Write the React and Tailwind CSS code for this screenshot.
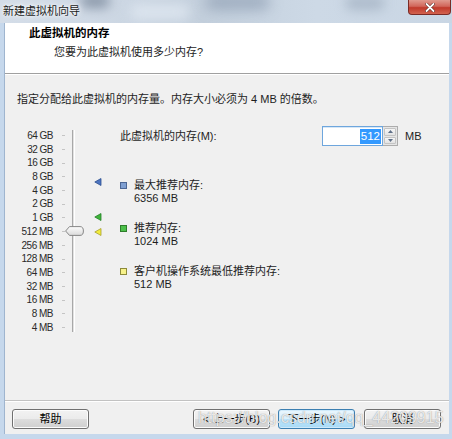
import React from "react";

const labels = ["64 GB","32 GB","16 GB","8 GB","4 GB","2 GB","1 GB","512 MB","256 MB","128 MB","64 MB","32 MB","16 MB","8 MB","4 MB"];

function Tri({ color, stroke, top }) {
  return (
    <svg className="absolute left-[19px]" style={{ top }} width="8" height="8" viewBox="0 0 8 8">
      <polygon points="7,0.5 7,7.5 0.8,4" fill={color} stroke={stroke} strokeWidth="0.8" />
    </svg>
  );
}

function Btn({ children, primary, className = "" }) {
  return (
    <div
      className={
        "h-[20px] w-[77px] flex items-center justify-center rounded-[3px] border text-[11px] text-black " +
        (primary
          ? "border-[#3c7fb1] bg-[linear-gradient(#eaf6fd_0%,#d9f0fc_50%,#bee6fd_51%,#a7d9f5_100%)] shadow-[inset_0_0_0_1px_#cfeafb]"
          : "border-[#707070] bg-[linear-gradient(#f2f2f2_0%,#ebebeb_50%,#dddddd_51%,#cfcfcf_100%)] shadow-[inset_0_0_0_1px_#fcfcfc]") +
        " " + className
      }
    >
      {children}
    </div>
  );
}

function Item({ sq, sqBorder, label, value, className = "" }) {
  return (
    <div className={"flex " + className}>
      <div className="w-[14px] pt-[3px]">
        <div className="w-[7px] h-[7px] border" style={{ background: sq, borderColor: sqBorder }} />
      </div>
      <div className="leading-[13px] text-[11px] text-[#1e1e1e]">
        <div>{label}</div>
        <div>{value}</div>
      </div>
    </div>
  );
}

export default function App() {
  return (
    <div className="w-[452px] h-[439px] relative overflow-hidden bg-[#c6d8ec] font-['Liberation_Sans','Noto_Sans_CJK_SC',sans-serif] flex flex-col">
      {/* title bar */}
      <div className="relative h-[23px] shrink-0 overflow-hidden bg-[linear-gradient(to_right,#d4dde8,#cfd9e5_20%,#c3cfdc_45%,#cdd9e6_70%,#c9d6e4)]">
        <div className="absolute left-[80px] top-[-6px] w-[30px] h-[14px] rounded-full bg-[#6d7c90] blur-[6px] opacity-70" />
        <div className="absolute left-[205px] top-[-6px] w-[65px] h-[16px] rounded-full bg-[#8d9db2] blur-[7px] opacity-70" />
        <div className="absolute left-[345px] top-[-4px] w-[40px] h-[14px] rounded-full bg-[#97a6b8] blur-[6px] opacity-60" />
        <div className="absolute left-[130px] top-[4px] w-[60px] h-[16px] rounded-full bg-[#e3ebf4] blur-[6px] opacity-70" />
        <div className="absolute left-[3px] top-[3px] text-[11px] leading-[16px] text-[#1a1a1a] [text-shadow:0_0_6px_#ffffff,0_0_3px_#ffffff]">
          新建虚拟机向导
        </div>
        <div className="absolute left-[408px] top-0 w-[43px] h-[15px] rounded-b-[4px] border border-t-0 border-[#7a2b26] bg-[linear-gradient(#e09a8f_0%,#d1665a_45%,#c0392b_55%,#d2634f_100%)] flex items-center justify-center">
          <svg width="10" height="9" viewBox="0 0 10 9">
            <path d="M1.5 1 L8.5 8 M8.5 1 L1.5 8" stroke="#5a2420" strokeWidth="3" strokeLinecap="round" />
            <path d="M1.5 1 L8.5 8 M8.5 1 L1.5 8" stroke="#ffffff" strokeWidth="1.8" strokeLinecap="round" />
          </svg>
        </div>
      </div>

      {/* content */}
      <div className="relative flex-1 ml-[4px] mr-[3px] mb-[5px] flex flex-col bg-[#f0f0f0] border-l border-[#9fb5cf]">
        {/* header */}
        <div className="h-[51px] shrink-0 bg-white border-b border-[#a0a0a0] pt-[3px]">
          <div className="pl-[24px] text-[11.5px] leading-[14px] font-bold text-black">此虚拟机的内存</div>
          <div className="pl-[49px] mt-[5px] text-[11px] leading-[14px] text-[#1e1e1e]">您要为此虚拟机使用多少内存?</div>
        </div>
        <div className="h-px bg-white" />

        {/* body */}
        <div className="flex-1 flex flex-col">
          <div className="pt-[17px] pl-[12px] text-[11px] leading-[14px] text-[#1e1e1e]">
            指定分配给此虚拟机的内存量。内存大小必须为 4 MB 的倍数。
          </div>

          <div className="mt-[20px] flex">
            {/* labels */}
            <div className="w-[48px] pt-[3px] flex flex-col text-right">
              {labels.map((l) => (
                <div key={l} className="h-[13.7px] leading-[13.7px] text-[10px] tracking-[-0.5px] text-[#2a2a2a]">
                  {l}
                </div>
              ))}
            </div>
            {/* ticks */}
            <div className="ml-[9px] w-[3px] pt-[3px] flex flex-col">
              {labels.map((l) => (
                <div key={l} className="h-[13.7px] flex items-center">
                  <div className="w-[3px] h-px bg-[#c4c4c4]" />
                </div>
              ))}
            </div>
            {/* track */}
            <div className="relative ml-[7px] w-[3px] pt-[4px] pb-[2px]">
              <div className="h-full w-[3px] border-l border-[#a8a8a8] border-r border-r-white bg-[#e2e2e2]" />
              <svg className="absolute left-[-7px] top-[100px]" width="19" height="10" viewBox="0 0 19 10">
                <defs>
                  <linearGradient id="th" x1="0" y1="0" x2="0" y2="1">
                    <stop offset="0" stopColor="#fdfdfd" />
                    <stop offset="1" stopColor="#dadada" />
                  </linearGradient>
                </defs>
                <path d="M0.6 5 L4.5 0.6 H15 Q18.4 0.6 18.4 5 Q18.4 9.4 15 9.4 H4.5 Z" fill="url(#th)" stroke="#7a7a7a" strokeWidth="0.9" />
              </svg>
            </div>
            {/* markers */}
            <div className="relative w-[45px]">
              <Tri color="#4d74c0" stroke="#2c4f8f" top={52} />
              <Tri color="#3fb43a" stroke="#24802a" top={87} />
              <Tri color="#f2ec3a" stroke="#a7a030" top={102} />
            </div>
            {/* right column */}
            <div className="flex-1 flex flex-col">
              <div className="h-[20px] flex items-center text-[11px] text-[#1e1e1e]">
                <div className="w-[202px]">此虚拟机的内存(M):</div>
                <div className="w-[61px] h-[20px] border border-[#6ea6dd] bg-white flex items-center justify-end pr-[1px] shadow-[inset_0_1px_0_#d7e7f6]">
                  <span className="bg-[#3399ff] text-white leading-[15px] px-[1px] text-[11.5px]">512</span>
                </div>
                <div className="w-[15px] h-[20px] border border-l-0 border-[#adadad] bg-[#e6e6e6] flex flex-col p-[1px] gap-px">
                  <div className="flex-1 rounded-[1px] border border-[#c4c4c4] bg-[linear-gradient(#f6f6f6,#e3e3e3)] flex items-center justify-center">
                    <svg width="5" height="3" viewBox="0 0 5 3"><polygon points="2.5,0 5,3 0,3" fill="#5f6f87" /></svg>
                  </div>
                  <div className="flex-1 rounded-[1px] border border-[#c4c4c4] bg-[linear-gradient(#f6f6f6,#e3e3e3)] flex items-center justify-center">
                    <svg width="5" height="3" viewBox="0 0 5 3"><polygon points="0,0 5,0 2.5,3" fill="#5f6f87" /></svg>
                  </div>
                </div>
                <div className="ml-[7px]">MB</div>
              </div>
              <Item className="mt-[33px]" sq="#7f9fd1" sqBorder="#4c6694" label="最大推荐内存:" value="6356 MB" />
              <Item className="mt-[17px]" sq="#4cc04a" sqBorder="#2f7d2c" label="推荐内存:" value="1024 MB" />
              <Item className="mt-[17px]" sq="#f7f28a" sqBorder="#8d8a3a" label="客户机操作系统最低推荐内存:" value="512 MB" />
            </div>
          </div>
        </div>

        {/* footer */}
        <div className="shrink-0 border-t border-[#c2c2c2]">
          <div className="h-px bg-white" />
          <div className="flex items-center pt-[7px] pb-[5px] pl-[7px] pr-[8px]">
            <Btn className="w-[77px]">帮助</Btn>
            <div className="flex-1" />
            <Btn>&lt; 上一步(B)</Btn>
            <Btn primary className="ml-[8px]">下一步(N) &gt;</Btn>
            <Btn className="ml-[9px] w-[76px]">取消</Btn>
          </div>
        </div>

        <div className="absolute left-[193px] top-[385px] text-[16px] leading-[20px] text-white/80 [text-shadow:0_0_1px_rgba(80,80,80,0.7)] whitespace-nowrap pointer-events-none">
          https://blog.csdn.net/qq_44209915
        </div>
      </div>
    </div>
  );
}
